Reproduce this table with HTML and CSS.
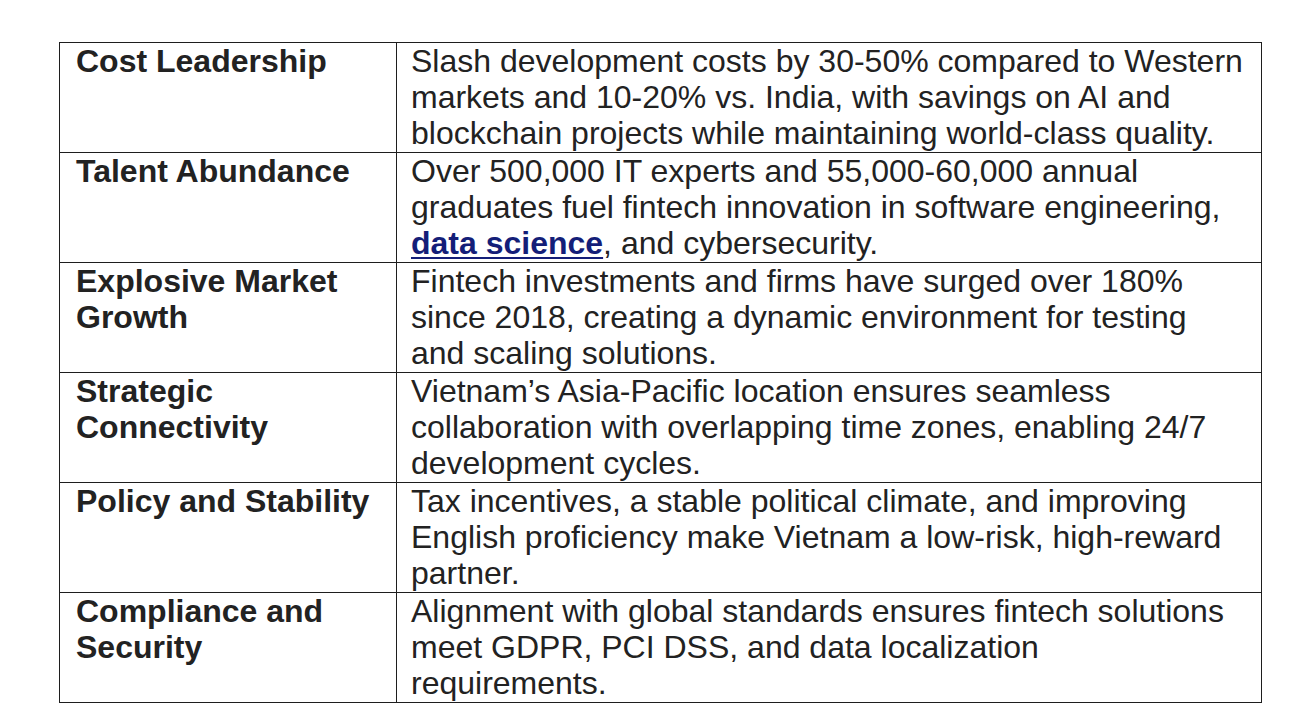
FILE: index.html
```html
<!DOCTYPE html>
<html lang="en">
<head>
<meta charset="utf-8">
<title>Vietnam Fintech Advantages</title>
<link rel="stylesheet" href="styles.css">
</head>
<body>
<div class="page">
<table class="facts">
  <colgroup><col class="c-key"><col class="c-val"></colgroup>
  <tbody>
    <tr>
      <th>Cost Leadership</th>
      <td>Slash development costs by 30-50% compared to Western markets and 10-20% vs. India, with savings on AI and blockchain projects while maintaining world-class quality.</td>
    </tr>
    <tr>
      <th>Talent Abundance</th>
      <td>Over 500,000 IT experts and 55,000-60,000 annual graduates fuel fintech innovation in software engineering, <a class="link" href="#">data science</a>, and cybersecurity.</td>
    </tr>
    <tr>
      <th>Explosive Market Growth</th>
      <td>Fintech investments and firms have surged over 180% since 2018, creating a dynamic environment for testing and scaling solutions.</td>
    </tr>
    <tr>
      <th>Strategic Connectivity</th>
      <td>Vietnam’s Asia-Pacific location ensures seamless collaboration with overlapping time zones, enabling 24/7 development cycles.</td>
    </tr>
    <tr>
      <th>Policy and Stability</th>
      <td>Tax incentives, a stable political climate, and improving English proficiency make Vietnam a low-risk, high-reward partner.</td>
    </tr>
    <tr>
      <th>Compliance and Security</th>
      <td>Alignment with global standards ensures fintech solutions meet GDPR, PCI DSS, and data localization<br>requirements.</td>
    </tr>
  </tbody>
</table>
</div>
</body>
</html>
```
FILE: styles.css
```css
html, body {
  margin: 0;
  padding: 0;
  background: #ffffff;
}
.page {
  padding: 42px 0 0 59px;
}
.facts {
  border-collapse: collapse;
  table-layout: fixed;
  width: 1202px;
  font-family: "Liberation Sans", Arial, sans-serif;
  font-size: 32px;
  line-height: 36px;
  color: #222222;
}
.c-key { width: 337px; }
.c-val { width: 865px; }
.facts th,
.facts td {
  border: 1.4px solid #1e1e1e;
  padding: 0 12px 0 16px;
  vertical-align: top;
  text-align: left;
  height: 109px;
  box-sizing: content-box;
}
.facts th {
  font-weight: bold;
}
.facts td {
  font-weight: normal;
  padding-left: 14px;
  padding-right: 15px;
}
.link {
  color: #141e78;
  font-weight: bold;
  text-decoration: underline;
  text-decoration-thickness: 2px;
  text-underline-offset: 3px;
}
```
